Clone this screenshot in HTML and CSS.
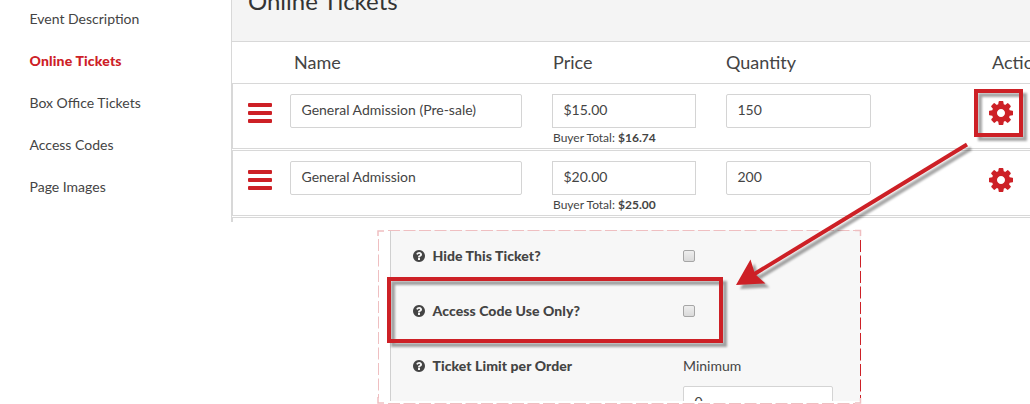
FILE: index.html
```html
<!DOCTYPE html>
<html lang="en">
<head>
  <meta charset="UTF-8" />
  <title>Online Tickets</title>
  <link rel="stylesheet" href="styles.css">
</head>
<body>

  <!-- shared icons -->
  <svg class="icon-defs" width="0" height="0">
    <symbol id="icon-cog" viewBox="0 -128 1536 1536">
      <path d="M1024 640q0-106-75-181t-181-75-181 75-75 181 75 181 181 75 181-75 75-181zm512-109v222q0 12-8 23t-20 13l-185 28q-19 54-39 91 35 50 107 138 10 12 10 25t-9 23q-27 37-99 108t-94 71q-12 0-26-9l-138-108q-44 23-91 38-16 136-29 186-7 28-36 28h-222q-14 0-24.5-8.5t-11.5-21.5l-28-184q-49-16-90-37l-141 107q-10 9-25 9-14 0-25-11-126-114-165-168-7-10-7-23 0-12 8-23 15-21 51-66.5t54-70.5q-27-50-41-99l-183-27q-13-2-21-12.5t-8-23.5v-222q0-12 8-23t19-13l186-28q14-46 39-92-40-57-107-138-10-12-10-24 0-10 9-23 26-36 98.5-107.5t94.5-71.5q13 0 26 10l138 107q44-23 91-38 16-136 29-186 7-28 36-28h222q14 0 24.5 8.5t11.5 21.5l28 184q49 16 90 37l142-107q9-9 24-9 13 0 25 10 129 119 165 170 7 8 7 22 0 12-8 23-15 21-51 66.5t-54 70.5q26 50 41 98l183 28q13 2 21 12.5t8 23.5z"/>
    </symbol>
    <symbol id="icon-help" viewBox="128 128 1536 1536">
      <path d="M1024 1376v-192q0-14-9-23t-23-9h-192q-14 0-23 9t-9 23v192q0 14 9 23t23 9h192q14 0 23-9t9-23zm256-672q0-88-55.5-163t-138.5-116-170-41q-243 0-371 213-15 24 8 42l132 100q7 6 19 6 16 0 25-12 53-68 86-92 34-24 86-24 48 0 85.5 26t37.5 59q0 38-20 61t-68 45q-63 28-115.5 86.5t-52.5 125.5v36q0 14 9 23t23 9h192q14 0 23-9t9-23q0-19 21.5-49.5t54.5-49.5q32-18 49-28.5t46-35 44.5-48 28-60.5 12.5-81zm384 192q0 209-103 385.5t-279.5 279.5-385.5 103-385.5-103-279.5-279.5-103-385.5 103-385.5 279.5-279.5 385.5-103 385.5 103 279.5 279.5 103 385.5z"/>
    </symbol>
  </svg>

  <div class="top">
    <nav class="side-nav">
      <a>Event Description</a>
      <a class="active">Online Tickets</a>
      <a>Box Office Tickets</a>
      <a>Access Codes</a>
      <a>Page Images</a>
    </nav>

    <main class="tickets">
      <div class="tickets-title"><h2>Online Tickets</h2></div>
      <div class="ticket-head">
        <span></span>
        <span class="head-name">Name</span>
        <span class="head-price">Price</span>
        <span>Quantity</span>
        <span class="head-actions">Actions</span>
      </div>

      <div class="ticket-row">
        <div class="handle"><i></i><i></i><i></i></div>
        <div class="field name">General Admission (Pre-sale)</div>
        <div>
          <div class="field price">$15.00</div>
          <div class="total">Buyer Total: <b>$16.74</b></div>
        </div>
        <div class="field qty">150</div>
        <svg class="cog"><use href="#icon-cog"/></svg>
      </div>

      <div class="ticket-row">
        <div class="handle"><i></i><i></i><i></i></div>
        <div class="field name">General Admission</div>
        <div>
          <div class="field price">$20.00</div>
          <div class="total">Buyer Total: <b>$25.00</b></div>
        </div>
        <div class="field qty">200</div>
        <svg class="cog"><use href="#icon-cog"/></svg>
      </div>

      <div class="ticket-row"></div>
    </main>
  </div>

  <!-- ticket settings -->
  <section class="settings">
    <div class="setting">
      <svg class="help"><use href="#icon-help"/></svg>
      <label>Hide This Ticket?</label>
      <span class="check"></span>
    </div>
    <div class="setting">
      <svg class="help"><use href="#icon-help"/></svg>
      <label>Access Code Use Only?</label>
      <span class="check"></span>
    </div>
    <div class="setting">
      <svg class="help"><use href="#icon-help"/></svg>
      <label>Ticket Limit per Order</label>
      <div class="limit">
        <span>Minimum</span>
        <div class="field">0</div>
      </div>
    </div>
  </section>

  <!-- frame, highlights and arrow on top of the page -->
  <svg class="overlay" width="1030" height="404">
    <g class="dashes light">
      <path d="M388 230.5H855"/>
      <path d="M388 403.5H855"/>
      <path d="M378.5 239V398"/>
    </g>
    <path class="dashes" d="M860.5 240V398"/>
    <path class="corners" d="M378 236V231H384M855 230.5H860.5V236M378 397V403H384M855 403H860.5V398"/>
    <g class="marks">
      <rect x="976" y="91" width="45" height="44"/>
      <rect x="389" y="279" width="332" height="62"/>
      <path d="M967 144.5L752 275.5"/>
      <path class="arrow-head" d="M736 285L750.5 259.5L755 274L765.5 283.5Z"/>
    </g>
  </svg>

</body>
</html>
```
FILE: styles.css
```css
* {
  box-sizing: border-box;
}

body {
  margin: 0;
  width: 1030px;
  height: 404px;
  overflow: hidden;
  position: relative;
  background: #fff;
  color: #444;
  font-family: Lato, "Liberation Sans", sans-serif;
  font-size: 14px;
}

.icon-defs {
  display: block;
}

.top {
  display: flex;
  height: 222px;
  overflow: hidden;
}

.side-nav {
  width: 231px;
  flex: none;
  padding-left: 29.5px;
  margin-top: -2px;
}

.side-nav a {
  display: block;
  line-height: 42px;
}

.side-nav .active {
  color: #cd2026;
  font-weight: 900;
  letter-spacing: 0.18px;
}

.tickets {
  flex: 1;
  min-width: 0;
  border-left: 1px solid #d8d8d8;
}

.tickets-title {
  display: flex;
  align-items: flex-start;
  height: 42px;
  padding-left: 16px;
  background: #f4f4f4;
  border-bottom: 1px solid #d8d8d8;
}

.tickets-title h2 {
  margin: -14px 0 0;
  font-size: 24px;
  line-height: 30px;
  font-weight: normal;
  color: #333;
}

.ticket-head,
.ticket-row {
  display: grid;
  grid-template-columns: 42px 262px 174px 263px 80px;
}

.ticket-head {
  height: 41px;
  padding-left: 16px;
  font-size: 18px;
  line-height: 41px;
}

.head-name {
  padding-left: 4px;
}

.head-price {
  padding-left: 1px;
}

.head-actions {
  padding-left: 3px;
}

.ticket-row {
  height: 66px;
  margin-bottom: 1px;
  padding: 10px 0 0 15px;
  border: 1px solid #d8d8d8;
  border-right: none;
}

.handle {
  display: flex;
  flex-direction: column;
  gap: 4px;
  width: 24px;
  padding-top: 9px;
}

.handle i {
  height: 4px;
  border-radius: 1px;
  background: #cd2026;
}

.field {
  height: 34px;
  padding-left: 10.5px;
  border: 1px solid #d4d4d4;
  border-radius: 2px;
  background: #fff;
  line-height: 30px;
}

.name {
  width: 232px;
}

.price {
  width: 144px;
  border-radius: 0;
}

.qty {
  width: 145px;
}

.total {
  padding-left: 1px;
  font-size: 12px;
  line-height: 20px;
}

.cog {
  width: 24px;
  height: 24px;
  margin-top: 7px;
  fill: #cd2026;
}

.settings {
  width: 471px;
  height: 171px;
  margin: 8px 0 0 390px;
  overflow: hidden;
  border-left: 1px solid #d0d0d0;
  background: #f7f7f7;
}

.setting {
  display: grid;
  grid-template-columns: 19.5px 250.5px 150px;
  align-items: start;
  height: 55px;
  padding: 16px 0 0 22px;
  line-height: 20px;
}

.setting label {
  font-weight: 900;
  letter-spacing: 0.07px;
}

.help {
  width: 12px;
  height: 12px;
  margin-top: 4px;
  fill: #444;
}

.check {
  width: 12px;
  height: 12px;
  margin-top: 4px;
  border: 1px solid #a6a6a6;
  border-radius: 2px;
  background: linear-gradient(#eee, #dadada);
}

.limit .field {
  margin-top: 10px;
}

.overlay {
  position: absolute;
  top: 0;
  left: 0;
}

.dashes {
  fill: none;
  stroke: #cd2026;
  stroke-width: 1;
  stroke-dasharray: 12 3.5;
}

.light {
  stroke: #efbfc1;
}

.corners {
  fill: none;
  stroke: #efbfc1;
  stroke-width: 1.5;
}

.marks {
  fill: none;
  stroke: #cd2026;
  stroke-width: 4;
  filter: drop-shadow(4px 4px 1px rgba(0, 0, 0, 0.35));
}

.arrow-head {
  fill: #cd2026;
  stroke: none;
}
```
